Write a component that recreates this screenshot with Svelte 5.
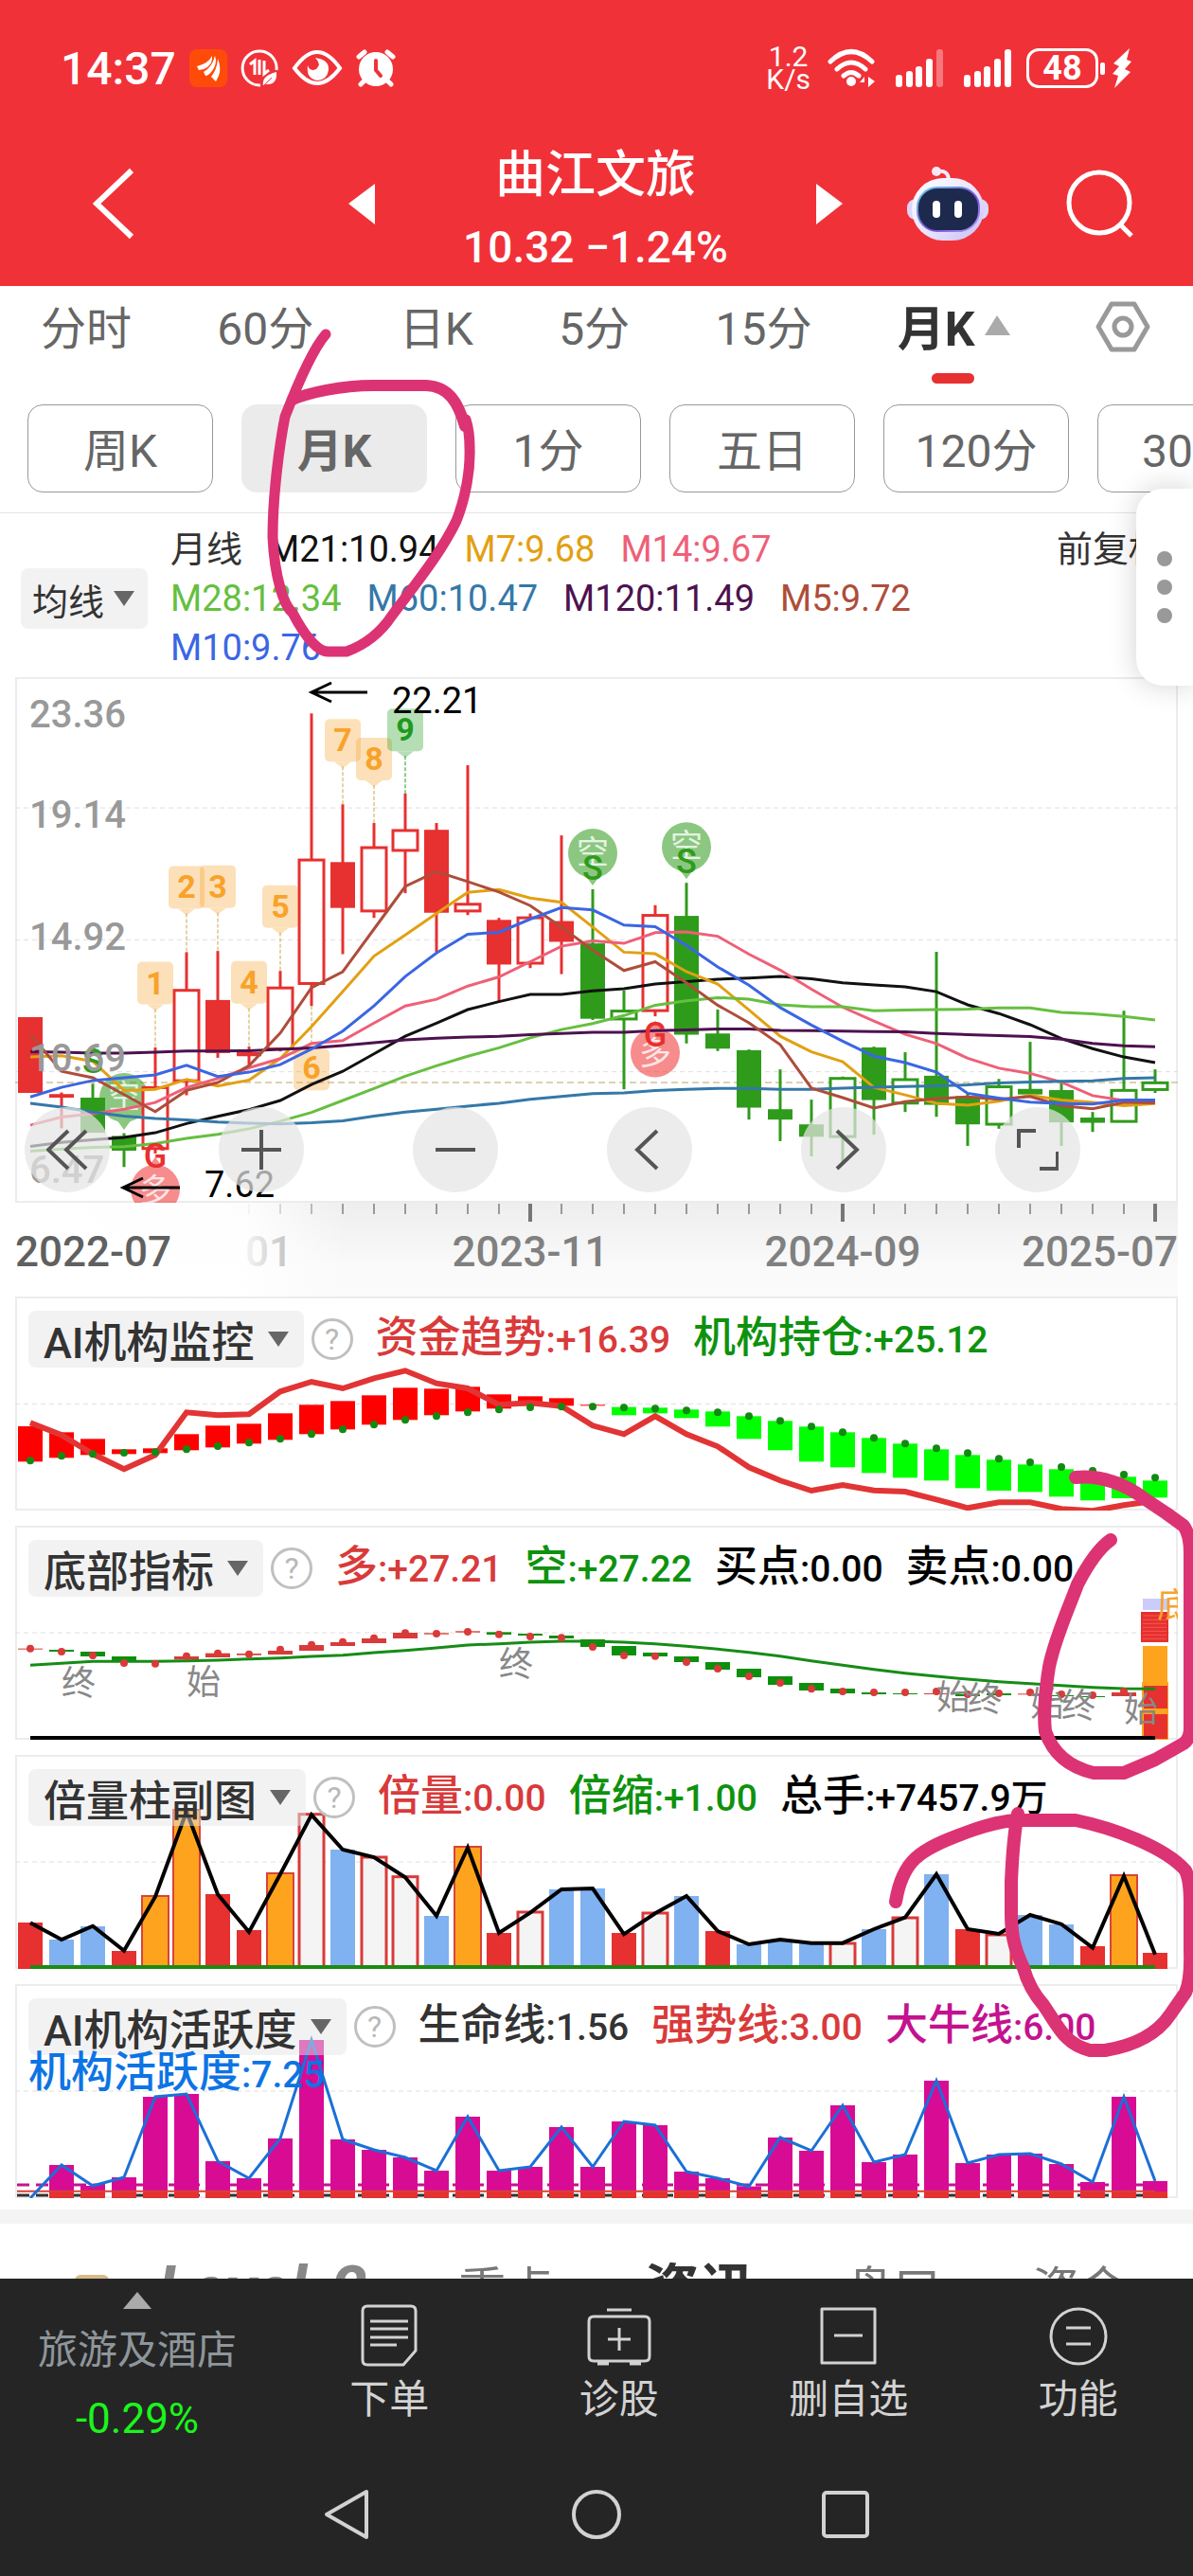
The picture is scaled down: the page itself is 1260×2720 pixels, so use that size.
<script>
const STEP = 33;
const LEFT = 16;
const RED = '#e73030';
const GREEN = '#2f9b1b';

const x = (i) => LEFT + i * STEP;
const my = (v) => (v - 33) / 2.376;
const scale = (top) => (v) => (v - top) / 3;
const points = (values, y) => values.map((v, i) => `${x(i)},${y(v).toFixed(1)}`).join(' ');

const periods = ['分时', '60分', '日K', '5分', '15分'];
const subPeriods = ['周K', '月K', '1分', '五日', '120分', '30分'];

const averages = [
  [
    { name: '月线', color: '#333' },
    { name: 'M21:10.94', color: '#111' },
    { name: 'M7:9.68', color: '#e2a012' },
    { name: 'M14:9.67', color: '#ee6078' },
  ],
  [
    { name: 'M28:12.34', color: '#66bf40' },
    { name: 'M60:10.47', color: '#3478a8' },
    { name: 'M120:11.49', color: '#4d124f' },
    { name: 'M5:9.72', color: '#ae4d3a' },
  ],
  [{ name: 'M10:9.76', color: '#3b66e3' }],
];

// high, body top, body bottom, low, kind (r/g filled, R/G hollow)
const candles = [
  [886, 886, 1076, 1076, 'r'], [1075, 1079, 1088, 1165, 'r'], [1053, 1088, 1176, 1176, 'g'],
  [1177, 1184, 1221, 1262, 'g'], [962, 1058, 1218, 1228, 'R'], [723, 814, 1048, 1082, 'R'],
  [720, 843, 976, 988, 'r'], [960, 974, 984, 1010, 'r'], [770, 808, 968, 972, 'R'],
  [124, 487, 804, 858, 'R'], [352, 497, 612, 728, 'r'], [399, 456, 622, 637, 'R'],
  [325, 413, 470, 575, 'R'], [399, 416, 624, 722, 'r'], [254, 598, 622, 630, 'R'],
  [637, 642, 754, 846, 'r'], [626, 632, 753, 763, 'R'], [430, 645, 697, 778, 'r'],
  [565, 701, 890, 893, 'g'], [819, 866, 893, 1067, 'G'], [605, 626, 872, 884, 'R'],
  [549, 632, 930, 952, 'g'], [867, 927, 965, 971, 'g'], [967, 969, 1113, 1143, 'g'],
  [1017, 1117, 1143, 1197, 'g'], [1093, 1155, 1186, 1235, 'g'], [1035, 1035, 1188, 1256, 'G'],
  [960, 962, 1094, 1181, 'g'], [974, 1038, 1104, 1124, 'G'], [722, 1033, 1106, 1136, 'g'],
  [1078, 1084, 1155, 1209, 'g'], [1041, 1056, 1157, 1166, 'G'], [948, 1066, 1080, 1080, 'g'],
  [1050, 1069, 1150, 1209, 'g'], [1124, 1138, 1151, 1174, 'g'], [870, 1065, 1150, 1150, 'G'],
  [1017, 1046, 1070, 1076, 'G'],
];

const lines = [
  { color: '#111', values: [1210, 1200, 1194, 1188, 1176, 1153, 1135, 1118, 1095, 1055, 1022, 978, 934, 901, 867, 847, 829, 829, 820, 815, 803, 797, 791, 788, 784, 790, 800, 805, 810, 822, 855, 877, 905, 940, 965, 986, 1000] },
  { color: '#e2a012', values: [986, 983, 997, 1070, 1067, 1042, 1059, 1044, 990, 910, 822, 733, 680, 626, 573, 566, 587, 598, 660, 723, 727, 772, 803, 868, 934, 973, 998, 1062, 1081, 1102, 1107, 1097, 1082, 1094, 1100, 1108, 1103] },
  { color: '#ee6078', values: [1157, 1137, 1128, 1117, 1100, 1063, 1040, 1013, 990, 952, 945, 901, 858, 841, 808, 785, 747, 708, 695, 701, 674, 672, 683, 728, 768, 816, 861, 896, 929, 952, 989, 1014, 1027, 1049, 1083, 1095, 1095] },
  { color: '#66bf40', values: [1222, 1217, 1213, 1211, 1203, 1190, 1180, 1166, 1147, 1125, 1095, 1065, 1034, 1008, 984, 963, 938, 917, 902, 882, 856, 845, 837, 841, 855, 860, 860, 870, 868, 867, 866, 863, 863, 874, 878, 884, 893] },
  { color: '#3478a8', values: [1102, 1112, 1124, 1134, 1140, 1144, 1149, 1152, 1154, 1151, 1146, 1134, 1124, 1117, 1109, 1102, 1092, 1085, 1078, 1076, 1070, 1067, 1065, 1065, 1067, 1067, 1064, 1062, 1060, 1058, 1056, 1051, 1049, 1047, 1046, 1040, 1038] },
  { color: '#4d124f', values: [973, 974, 976, 976, 974, 971, 971, 970, 967, 963, 957, 950, 943, 939, 936, 934, 930, 927, 924, 924, 920, 918, 916, 916, 919, 920, 921, 922, 923, 927, 930, 932, 935, 941, 952, 958, 960] },
  { color: '#ae4d3a', values: [930, 1022, 1038, 1080, 1123, 1070, 1050, 1008, 926, 812, 772, 665, 558, 521, 546, 572, 606, 660, 718, 769, 747, 800, 856, 900, 955, 1064, 1088, 1114, 1098, 1090, 1086, 1092, 1085, 1108, 1116, 1100, 1101] },
  { color: '#3b66e3', values: [1086, 1062, 1045, 1038, 1031, 1007, 1035, 1024, 1005, 966, 921, 858, 784, 725, 678, 673, 640, 611, 617, 655, 659, 706, 760, 806, 862, 906, 946, 984, 1000, 1024, 1077, 1089, 1099, 1103, 1104, 1094, 1094] },
];

const grid = [361, 692, 1023];
const prices = [
  { text: '23.36', v: 158 },
  { text: '19.14', v: 411 },
  { text: '14.92', v: 718 },
  { text: '10.69', v: 1022 },
  { text: '6.47', v: 1302 },
];

const tags = [
  { n: 1, i: 4, v: 747, end: 962 },
  { n: 2, i: 5, v: 507, end: 723 },
  { n: 3, i: 6, v: 505, end: 720 },
  { n: 4, i: 7, v: 745, end: 960 },
  { n: 5, i: 8, v: 555, end: 770 },
  { n: 7, i: 10, v: 138, end: 352 },
  { n: 8, i: 11, v: 185, end: 399 },
  { n: 9, i: 12, v: 112, end: 325 },
];

const shorts = [{ i: 3, v: 1088 }, { i: 18, v: 475 }, { i: 21, v: 459 }];
const longs = [{ i: 4, v: 1318 }, { i: 20, v: 975 }];
const letters = [
  { t: 'S', i: 2, v: 995 }, { t: 'S', i: 18, v: 510 }, { t: 'S', i: 21, v: 494 },
  { t: 'G', i: 4, v: 1232 }, { t: 'G', i: 20, v: 928 },
];

const dates = [
  { text: '2023-11', i: 16 },
  { text: '2024-09', i: 26 },
];

// AI monitor: bar top, bar bottom, dot
const ay = scale(23);
const monitor = [
  [434, 546, 543], [453, 534, 528], [474, 525, 522], [507, 522, 518], [504, 519, 516], [459, 510, 507],
  [432, 501, 497], [426, 489, 486], [393, 477, 474], [366, 459, 459], [354, 444, 444], [336, 429, 429],
  [312, 414, 414], [315, 399, 402], [309, 387, 390], [333, 378, 381], [339, 369, 374], [345, 369, 372],
  [366, 369, 372], [373, 399, 375], [375, 393, 378], [381, 408, 384], [387, 435, 390], [402, 474, 402],
  [417, 510, 417], [435, 546, 435], [453, 564, 453], [471, 582, 471], [489, 597, 489], [507, 606, 504],
  [525, 630, 519], [540, 638, 537], [555, 642, 548], [570, 657, 563], [584, 669, 575], [594, 662, 587],
  [606, 660, 597],
];
const fund = [423, 462, 522, 570, 525, 390, 399, 396, 324, 293, 314, 282, 258, 298, 314, 366, 360, 370, 432, 459, 402, 459, 498, 564, 606, 638, 620, 637, 641, 666, 693, 675, 675, 696, 702, 684, 670];

// bottom indicator
const by = scale(750);
const bottoms = [
  [1139, 1142, 1139, 'r'], [1143, 1149, 1149, 'g'], [1149, 1164, 1161, 'g'], [1164, 1182, 1185, 'g'],
  [1178, 1181, 1187, 'r'], [1164, 1174, 1163, 'r'], [1154, 1167, 1154, 'r'], [1155, 1160, 1157, 'r'],
  [1146, 1158, 1142, 'r'], [1128, 1146, 1127, 'r'], [1119, 1131, 1118, 'r'], [1107, 1122, 1106, 'r'],
  [1089, 1107, 1090, 'r'], [1090, 1094, 1092, 'r'], [1084, 1088, 1086, 'r'], [1087, 1095, 1094, 'g'],
  [1092, 1098, 1101, 'g'], [1098, 1107, 1105, 'g'], [1110, 1134, 1134, 'g'], [1131, 1161, 1161, 'g'],
  [1152, 1164, 1163, 'g'], [1164, 1182, 1182, 'g'], [1182, 1206, 1203, 'g'], [1203, 1230, 1227, 'g'],
  [1227, 1254, 1248, 'g'], [1248, 1272, 1267, 'g'], [1266, 1281, 1275, 'g'], [1278, 1284, 1278, 'g'],
  [1281, 1284, 1278, 'g'], [1281, 1284, 1275, 'r'], [1284, 1290, 1284, 'g'], [1281, 1287, 1281, 'g'],
  [1282, 1285, 1278, 'r'], [1287, 1290, 1284, 'g'], [1290, 1293, 1287, 'g'], [1278, 1290, 1275, 'r'],
];
const trend = [1192, 1186, 1180, 1180, 1180, 1178, 1176, 1172, 1169, 1164, 1160, 1152, 1145, 1137, 1128, 1124, 1119, 1116, 1116, 1119, 1124, 1132, 1141, 1151, 1163, 1178, 1192, 1205, 1217, 1227, 1236, 1244, 1250, 1256, 1262, 1266, 1267];
const marks = [
  { t: '终', i: 1, v: 1287 }, { t: '始', i: 5, v: 1283 }, { t: '终', i: 15, v: 1228 },
  { t: '始', i: 29, v: 1332 }, { t: '终', i: 30, v: 1338 }, { t: '始', i: 32, v: 1354 },
  { t: '终', i: 33, v: 1360 }, { t: '始', i: 35, v: 1370 },
];

// volume: r filled red, b blue, o orange, h hollow
const vy = scale(36);
const volumes = [
  [567, 'r'], [621, 'b'], [579, 'b'], [657, 'r'], [480, 'o'], [207, 'o'], [477, 'r'], [591, 'r'],
  [408, 'o'], [218, 'h'], [336, 'b'], [354, 'h'], [416, 'h'], [546, 'b'], [324, 'o'], [600, 'r'],
  [528, 'h'], [462, 'b'], [459, 'b'], [600, 'r'], [531, 'h'], [483, 'b'], [594, 'r'], [636, 'b'],
  [627, 'b'], [634, 'b'], [627, 'h'], [588, 'b'], [546, 'h'], [414, 'b'], [588, 'r'], [600, 'h'],
  [543, 'b'], [573, 'b'], [642, 'r'], [414, 'o'], [663, 'r'],
];
const volumeLine = [568, 621, 578, 656, 485, 215, 478, 597, 414, 226, 336, 360, 424, 546, 330, 600, 536, 462, 459, 604, 538, 483, 594, 636, 621, 632, 632, 588, 551, 414, 588, 603, 543, 572, 647, 420, 668];

// activity
const cy = scale(762);
const activity = [1440, 1335, 1401, 1374, 1119, 1110, 1323, 1377, 1251, 939, 1254, 1287, 1311, 1353, 1182, 1353, 1341, 1215, 1341, 1197, 1209, 1356, 1377, 1403, 1248, 1290, 1146, 1326, 1302, 1068, 1329, 1302, 1299, 1332, 1389, 1119, 1386];

const panels = [
  {
    id: 'monitor', title: 'AI机构监控',
    values: [['资金趋势', '+16.39', '#d93a3a'], ['机构持仓', '+25.12', '#0e920e']],
  },
  {
    id: 'bottom', title: '底部指标',
    values: [['多', '+27.21', '#d93a3a'], ['空', '+27.22', '#0e920e'], ['买点', '0.00', '#000'], ['卖点', '0.00', '#000']],
  },
  {
    id: 'volume', title: '倍量柱副图',
    values: [['倍量', '0.00', '#d93a3a'], ['倍缩', '+1.00', '#0e920e'], ['总手', '+7457.9万', '#000']],
  },
  {
    id: 'activity', title: 'AI机构活跃度',
    values: [['生命线', '1.56', '#333'], ['强势线', '3.00', '#d93a3a'], ['大牛线', '6.00', '#c4128f']],
    extra: ['机构活跃度', '7.25'],
  },
];
const gridLine = { monitor: ay(363), bottom: by(1089), volume: vy(375), activity: cy(1101) };
</script>

<main class="page">
  <header class="top">
    <div class="status">
      <span class="clock">14:37</span>
      <svg class="app-icon" width="40" height="40" viewBox="0 0 40 40">
        <rect width="40" height="40" rx="8" fill="#ff4b0a" />
        <path d="M8 18 Q20 15 24 7 Q25 14 19 19 Q15 22 10 22Z M15 24 Q24 19 27 7 Q30 15 24 23 Q20 28 17 28Z M23 29 Q29 22 30 10 Q34 20 31 28 L28 34Z" fill="#fff" />
      </svg>
      <svg width="40" height="40" viewBox="0 0 40 40" fill="none" stroke="#fff" stroke-width="3">
        <path d="M21 38 A18 18 0 1 1 38 22" />
        <path d="M10 16 L15 12 V27 M20 11 V27 M25 12 V26 L30 22" stroke-width="3" />
        <path d="M24 38 Q22 28 38 24 Q39 38 27 37 Z" fill="#fff" stroke="none" />
        <path d="M25 38 L33 30" stroke="#f13138" stroke-width="1" />
      </svg>
      <svg width="54" height="40" viewBox="0 0 54 40">
        <path d="M3 20 Q27 -14 51 20 Q27 52 3 20Z" fill="none" stroke="#fff" stroke-width="4" />
        <path d="M17 17 Q19 24 26 21 Q32 16 25 9 Q40 11 39 22 Q37 33 27 33 Q15 31 17 17Z" fill="#fff" />
      </svg>
      <svg width="42" height="40" viewBox="0 0 42 40">
        <circle cx="21" cy="21" r="18" fill="#fff" />
        <path d="M3 8 L9 3 M39 8 L33 3 M9 33 L5 37 M33 33 L37 37" stroke="#fff" stroke-width="5" stroke-linecap="round" />
        <path d="M21 12 V22 L26 28" fill="none" stroke="#f13138" stroke-width="4" stroke-linecap="round" />
      </svg>
      <span class="speed">1.2<br />K/s</span>
      <svg class="wifi" width="50" height="42" viewBox="0 0 50 42" fill="none" stroke="#fff" stroke-width="5" stroke-linecap="round">
        <path d="M3 14 Q25 -7 47 14 M10 22 Q25 8 40 22 M17 29 Q25 22 33 29" />
        <circle cx="25" cy="35" r="5" fill="#fff" stroke="none" />
        <path d="M34 36 L39 30 V40 V36Z M43 30 V41 L50 35Z" fill="#fff" stroke="none" />
      </svg>
      {#each [0.35, 1] as last}
        <svg class="signal" width="50" height="40" viewBox="0 0 50 40" fill="#fff">
          <rect x="0" y="27" width="7" height="13" rx="3" />
          <rect x="11" y="23" width="7" height="17" rx="3" />
          <rect x="21" y="18" width="7" height="22" rx="3" />
          <rect x="32" y="10" width="7" height="30" rx="3" />
          <rect x="43" y="0" width="7" height="40" rx="3" opacity={last} />
        </svg>
      {/each}
      <span class="battery">48</span>
      <svg class="bolt" width="34" height="44" viewBox="0 0 34 44" fill="#fff">
        <rect x="0" y="16" width="5" height="13" rx="2" />
        <path d="M31 1 L14 17 L20 20 L13 28 L19 30 L15 43 L32 26 L26 23 L33 15 L28 13Z" />
      </svg>
    </div>

    <div class="titlebar">
      <button class="plain" aria-label="返回">
        <svg width="46" height="76" viewBox="0 0 46 76"><path d="M41 3 L4 38 L41 73" fill="none" stroke="#fff" stroke-width="6" /></svg>
      </button>
      <div class="stock">
        <button class="plain" aria-label="上一只"><svg width="28" height="43" viewBox="0 0 28 43"><path d="M28 0 V43 L0 21Z" fill="#fff" /></svg></button>
        <div class="name">
          <h1>曲江文旅</h1>
          <p>10.32 −1.24%</p>
        </div>
        <button class="plain" aria-label="下一只"><svg width="28" height="43" viewBox="0 0 28 43"><path d="M0 0 V43 L28 21Z" fill="#fff" /></svg></button>
      </div>
      <button class="plain" aria-label="助手">
        <svg width="86" height="80" viewBox="0 0 86 80">
          <defs>
            <linearGradient id="head" x1="0" y1="0" x2="1" y2="1">
              <stop offset="0" stop-color="#fff" />
              <stop offset="0.55" stop-color="#e8e4fb" />
              <stop offset="1" stop-color="#c4bdf5" />
            </linearGradient>
            <linearGradient id="rim" x1="0" y1="0" x2="1" y2="1">
              <stop offset="0" stop-color="#6fd0e8" />
              <stop offset="0.6" stop-color="#7a4de0" />
              <stop offset="1" stop-color="#b9a2ff" />
            </linearGradient>
          </defs>
          <path d="M32 6 Q44 4 44 16" fill="none" stroke="#f3eafa" stroke-width="4" />
          <circle cx="31" cy="6" r="5" fill="#f7e6f4" />
          <rect x="0" y="35" width="86" height="22" rx="9" fill="#dcd6fa" />
          <rect x="5" y="13" width="76" height="66" rx="33" fill="url(#head)" />
          <rect x="11" y="23" width="65" height="46" rx="21" fill="#1d2a4d" stroke="url(#rim)" stroke-width="2" />
          <rect x="27" y="37" width="8" height="18" rx="4" fill="#fff" />
          <rect x="50" y="37" width="8" height="18" rx="4" fill="#fff" />
        </svg>
      </button>
      <button class="plain" aria-label="搜索">
        <svg width="72" height="72" viewBox="0 0 72 72" fill="none" stroke="#fff" stroke-width="5">
          <circle cx="35" cy="35" r="32" /><path d="M57 58 L69 70" />
        </svg>
      </button>
    </div>
  </header>

  <nav class="periods">
    {#each periods as p}
      <button class="plain">{p}</button>
    {/each}
    <button class="plain current">月K
      <svg width="27" height="21" viewBox="0 0 27 21"><path d="M13 0 L27 21 H0Z" fill="#aaa" /></svg>
    </button>
    <button class="plain" aria-label="设置">
      <svg width="58" height="54" viewBox="0 0 58 54" fill="none" stroke="#999" stroke-width="5" stroke-linejoin="round">
        <path d="M17 3 H41 L55 27 L41 51 H17 L3 27Z" /><circle cx="29" cy="27" r="9" />
      </svg>
    </button>
  </nav>

  <div class="pills">
    {#each subPeriods as p}
      <button class="pill" class:active={p === '月K'}>{p}</button>
    {/each}
  </div>

  <section class="legend">
    <button class="pick small">均线 <svg width="22" height="16" viewBox="0 0 22 16"><path d="M0 0 H22 L11 16Z" fill="#666" /></svg></button>
    <div class="averages">
      {#each averages as row}
        <div class="row">
          {#each row as a}
            <span style="color: {a.color}">{a.name}</span>
          {/each}
        </div>
      {/each}
    </div>
    <span class="adjust">前复权</span>
  </section>

  <section class="charts">
    <div class="chart">
      <svg viewBox="0 0 1228 555">
        <rect x="1" y="1" width="1226" height="553" class="frame" />
        {#each grid as v}
          <line x1="0" x2="1228" y1={my(v)} y2={my(v)} class="grid" />
        {/each}
        <line x1="0" x2="1228" y1={my(1050)} y2={my(1050)} stroke="#bda36c" stroke-width="1" stroke-dasharray="7 4" />

        {#each shorts as s}
          <g opacity="0.55">
            <circle cx={x(s.i)} cy={my(s.v)} r="26" fill="#2f9b1b" />
            <path d="M{x(s.i) - 8} {my(s.v) + 23} h16 l-8 11z" fill="#2f9b1b" />
            <text x={x(s.i)} y={my(s.v) + 11} class="coin">空</text>
          </g>
        {/each}
        {#each longs as s}
          <g opacity="0.55">
            <circle cx={x(s.i)} cy={my(s.v)} r="26" fill="#f03030" />
            <path d="M{x(s.i) - 8} {my(s.v) - 23} h16 l-8 -11z" fill="#f03030" />
            <text x={x(s.i)} y={my(s.v) + 13} class="coin">多</text>
          </g>
        {/each}

        {#each candles as [high, top, bottom, low, kind], i}
          {@const color = kind.toLowerCase() === 'r' ? RED : GREEN}
          <line x1={x(i)} x2={x(i)} y1={my(high)} y2={my(low)} stroke={color} stroke-width="3" />
          {#if kind === 'r' || kind === 'g'}
            <rect x={x(i) - 13} y={my(top)} width="26" height={my(bottom) - my(top)} fill={color} />
          {:else}
            <rect x={x(i) - 13} y={my(top) + 2} width="26" height={my(bottom) - my(top) - 3} fill="#fff" stroke={color} stroke-width="3" />
          {/if}
        {/each}

        {#each tags as t}
          {@const c = t.n === 9 ? '#1d9a1d' : '#f8a22a'}
          <line x1={x(t.i)} x2={x(t.i)} y1={my(t.v) + 50} y2={my(t.end)} stroke={t.n === 9 ? c : '#c9a74a'} stroke-dasharray="4 2" />
          <g fill={c} opacity="0.32">
            <rect x={x(t.i) - 19} y={my(t.v)} width="38" height="45" rx="5" />
            <path d="M{x(t.i) - 9} {my(t.v) + 45} h18 l-9 7z" />
          </g>
          <text x={x(t.i)} y={my(t.v) + 34} class="tag" fill={c}>{t.n}</text>
        {/each}
        <line x1={x(9)} x2={x(9)} y1={my(858)} y2={my(955)} stroke="#c9a74a" stroke-dasharray="4 2" />
        <g fill="#f8a22a" opacity="0.32">
          <rect x={x(9) - 19} y={my(965)} width="38" height="44" rx="5" />
          <path d="M{x(9) - 9} {my(965)} h18 l-9 -7z" />
        </g>
        <text x={x(9)} y={my(965) + 32} class="tag" fill="#f8a22a">6</text>

        {#each lines as l}
          <polyline points={points(l.values, my)} fill="none" stroke={l.color} stroke-width="3" />
        {/each}

        {#each letters as s}
          <text x={x(s.i)} y={my(s.v) + 13} class="letter" fill={s.t === 'S' ? GREEN : RED}>{s.t}</text>
        {/each}
        {#each prices as p}
          <text x="15" y={my(p.v)} class="price">{p.text}</text>
        {/each}

        <path d="M372 16 H314 M334 6 L313 16 L334 26" class="arrow" />
        <text x="398" y="38" class="peak">22.21</text>
        <path d="M174 539 H115 M135 529 L114 539 L135 549" class="arrow" />
        <text x="200" y="549" class="peak">7.62</text>
      </svg>
      <div class="tools">
        <button aria-label="展开"><svg viewBox="0 0 44 44"><path d="M23 2 L2 22 L23 42 M42 2 L21 22 L42 42" /></svg></button>
        <button aria-label="放大"><svg viewBox="0 0 44 44"><path d="M22 1 V43 M1 22 H43" /></svg></button>
        <button aria-label="缩小"><svg viewBox="0 0 44 44"><path d="M1 22 H43" /></svg></button>
        <button aria-label="左移"><svg viewBox="0 0 44 44"><path d="M30 2 L9 22 L30 42" /></svg></button>
        <button aria-label="右移"><svg viewBox="0 0 44 44"><path d="M15 2 L36 22 L15 42" /></svg></button>
        <button aria-label="全屏"><svg viewBox="0 0 44 44"><path d="M2 20 V2 H20 M24 42 H43 V24" /></svg></button>
      </div>
    </div>

    <svg class="axis" viewBox="0 0 1228 99">
      <defs>
        <linearGradient id="fade" x1="0" x2="0" y1="0" y2="1">
          <stop offset="0" stop-color="#eeeeee" /><stop offset="0.7" stop-color="#fafafa" /><stop offset="1" stop-color="#fafafa" />
        </linearGradient>
        <linearGradient id="side" x1="0" x2="1" y1="0" y2="0">
          <stop offset="0" stop-color="#fff" stop-opacity="1" /><stop offset="0.7" stop-color="#fff" stop-opacity="0.9" /><stop offset="1" stop-color="#fff" stop-opacity="0" />
        </linearGradient>
      </defs>
      <rect width="1228" height="99" fill="url(#fade)" />
      {#each candles as _, i}
        {#if i > 6}
          {@const major = i % 10 === 6}
          <line x1={x(i)} x2={x(i)} y1="1" y2={major ? 20 : 12} stroke={major ? '#777' : '#999'} stroke-width={major ? 4 : 2} />
        {/if}
      {/each}
      <text x="293" y="67" class="date" text-anchor="end">01</text>
      <rect width="350" height="99" fill="url(#side)" />
      {#each dates as d}
        <text x={x(d.i)} y="67" class="date" text-anchor="middle">{d.text}</text>
      {/each}
      <text x="1228" y="67" class="date" text-anchor="end">2025-07</text>
      <text x="0" y="67" class="date first">2022-07</text>
    </svg>

    {#each panels as p (p.id)}
      <div class="panel">
        <svg viewBox="0 0 1228 226">
          <rect x="1" y="1" width="1226" height="224" class="frame" />
          <line x1="0" x2="1228" y1={gridLine[p.id]} y2={gridLine[p.id]} class="grid" />
          {#if p.id === 'monitor'}
            {#each monitor as [top, bottom], i}
              <rect x={x(i) - 13} y={ay(top)} width="26" height={ay(bottom) - ay(top)} fill={i < 19 ? '#f00' : '#0f0'} />
            {/each}
            <polyline points={points(fund, ay)} fill="none" stroke="#e23434" stroke-width="6" />
            {#each monitor as [, , dot], i}
              <circle cx={x(i)} cy={ay(dot)} r="4" fill="#128a12" />
            {/each}
          {:else if p.id === 'bottom'}
            {#each bottoms as [top, bottom, , kind], i}
              <rect x={x(i) - 13} y={by(top)} width="26" height={by(bottom) - by(top)} fill={kind === 'r' ? '#d93a3a' : '#0c8f0c'} />
            {/each}
            <rect x="1191" y={by(981)} width="26" height="12" fill="#ccccfb" />
            <rect x="1189" y={by(1023)} width="29" height="32" fill={RED} />
            {#each [1035, 1048, 1060, 1072, 1084, 1096, 1108] as v}
              <line x1="1191" x2="1216" y1={by(v)} y2={by(v)} stroke="#f05a50" />
            {/each}
            <rect x="1191" y={by(1131)} width="26" height="40" fill="#fda31e" />
            <rect x="1190" y={by(1245)} width="28" height="62" fill="#fda31e" />
            <rect x="1192" y={by(1257)} width="25" height="24" fill={RED} />
            <rect x="1192" y={by(1347)} width="25" height="26" fill={RED} />
            <line x1={x(0)} x2={x(36)} y1="224" y2="224" stroke="#000" stroke-width="4" />
            <polyline points={points(trend, by)} fill="none" stroke="#168c16" stroke-width="3" />
            {#each bottoms as [, , dot], i}
              <circle cx={x(i)} cy={by(dot)} r="4" fill="#d93a3a" />
            {/each}
            {#each marks as m}
              <text x={x(m.i)} y={by(m.v)} class="mark">{m.t}</text>
            {/each}
            <text x="1206" y={by(1042)} class="mark low">底</text>
          {:else if p.id === 'volume'}
            {#each volumes as [v, kind], i}
              {#if kind === 'h'}
                <rect x={x(i) - 13} y={vy(v) + 2} width="26" height={vy(714) - vy(v)} fill="#f5f4f4" stroke="#d93a3a" stroke-width="3" />
              {:else if kind === 'o'}
                <rect x={x(i) - 14} y={vy(v) + 1} width="28" height={vy(714) - vy(v)} fill="#fda31e" stroke="#d9433a" stroke-width="2" />
              {:else}
                <rect x={x(i) - 13} y={vy(v)} width="26" height={vy(715) - vy(v)} fill={kind === 'r' ? RED : '#80b1f0'} />
              {/if}
            {/each}
            <polyline points={points(volumeLine, vy)} fill="none" stroke="#000" stroke-width="4" />
            <line x1={x(0)} x2={x(36)} y1="224" y2="224" stroke="#1c8a10" stroke-width="4" />
          {:else}
            <line x1="2" x2={x(36)} y1={cy(1398)} y2={cy(1398)} stroke="#c4128f" stroke-width="3" stroke-dasharray="13 7" />
            <line x1="2" x2={x(36)} y1={cy(1431)} y2={cy(1431)} stroke="#333" stroke-width="3" stroke-dasharray="13 7" />
            {#each activity as v, i}
              {#if i > 0}
                <rect x={x(i) - 13} y={cy(v)} width="26" height={cy(1442) - cy(v)} fill="#d80b95" />
                <rect x={x(i) - 13} y={cy(1419)} width="26" height="8" fill="#e4322f" />
              {/if}
            {/each}
            <line x1="2" x2={x(36)} y1={cy(1418)} y2={cy(1418)} stroke="#d9403a" stroke-width="2" />
            <polyline points={points(activity, cy)} fill="none" stroke="#1b70d6" stroke-width="3" />
          {/if}
        </svg>
        <div class="head">
          <button class="pick">{p.title} <svg width="22" height="16" viewBox="0 0 22 16"><path d="M0 0 H22 L11 16Z" fill="#666" /></svg></button>
          <button class="help" aria-label="说明">?</button>
          {#each p.values as [label, value, color]}
            <span class="value" style="color: {color}">{label}<b>:{value}</b></span>
          {/each}
        </div>
        {#if p.extra}
          <div class="extra">{p.extra[0]}<b>:{p.extra[1]}</b></div>
        {/if}
      </div>
    {/each}
  </section>

  <div class="strip"></div>
  <nav class="info">
    <a href="#level2" class="level"><i></i>Level-2</a>
    <a href="#key">重点</a>
    <a href="#news" class="on">资讯</a>
    <a href="#quote">盘口</a>
    <a href="#money">资金</a>
  </nav>

  <footer class="bottom">
    <div class="actions">
      <button class="plain sector">
        <svg width="30" height="18" viewBox="0 0 30 18"><path d="M15 0 L30 18 H0Z" fill="#aaa" /></svg>
        <span>旅游及酒店</span>
        <b>-0.29%</b>
      </button>
      <button class="plain">
        <svg width="70" height="68" viewBox="0 0 70 68">
          <path d="M12 3 H58 Q63 3 63 8 V50 L50 65 H12 Q7 65 7 60 V8 Q7 3 12 3Z M15 19 H55 M15 27 H55 M15 36 H55 M15 44 H43" />
        </svg>
        下单
      </button>
      <button class="plain">
        <svg width="70" height="68" viewBox="0 0 70 68">
          <path d="M22 7 H48 M8 14 H62 Q67 14 67 19 V56 Q67 61 62 61 H8 Q3 61 3 56 V19 Q3 14 8 14Z M35 26 V50 M23 38 H47 M12 64 H24 M46 64 H58" />
        </svg>
        诊股
      </button>
      <button class="plain">
        <svg width="70" height="68" viewBox="0 0 70 68"><path d="M7 6 H63 V63 H7Z M20 34 H50" /></svg>
        删自选
      </button>
      <button class="plain">
        <svg width="70" height="68" viewBox="0 0 70 68"><circle cx="35" cy="35" r="29" /><path d="M22 26 H48 M22 43 H48" /></svg>
        功能
      </button>
    </div>
    <div class="system">
      <button class="plain" aria-label="后退"><svg width="54" height="54" viewBox="0 0 54 54"><path d="M47 3 V51 L5 27Z" /></svg></button>
      <button class="plain" aria-label="主页"><svg width="54" height="54" viewBox="0 0 54 54"><circle cx="27" cy="27" r="24" /></svg></button>
      <button class="plain" aria-label="最近任务"><svg width="54" height="54" viewBox="0 0 54 54"><rect x="4" y="4" width="46" height="46" rx="3" /></svg></button>
    </div>
  </footer>

  <button class="handle" aria-label="更多"><i></i><i></i><i></i></button>

  <!-- hand-drawn marks over the page -->
  <svg class="ink" viewBox="0 0 1260 2720" fill="none" stroke="#dc3374" stroke-width="14" stroke-linecap="round" stroke-linejoin="round">
    <path stroke-width="11" d="M344 353 C331 368 318 396 301 440 C296 465 288 520 288 567 C290 610 300 640 309 647 C320 668 334 688 346 688 H366 C388 680 404 665 414 650 C440 615 465 585 482 550 C490 530 497 500 496 473 Q496 455 492 443" />
    <path stroke-width="12" d="M309 422 C325 415 360 407 394 407 H450 C474 408 484 425 491 450" />
    <path d="M1136 1560 C1163 1557 1190 1568 1208 1582 L1232 1598 L1250 1611 Q1257 1620 1257 1640 V1825 Q1257 1836 1250 1841 L1220 1858 L1187 1872 H1155 C1130 1866 1112 1852 1104 1828 C1102 1810 1104 1785 1108 1760 C1114 1730 1128 1700 1138 1673 Q1156 1638 1173 1626" />
    <path d="M946 2008 C953 1965 970 1953 1020 1935 Q1055 1922 1077 1922 H1136 C1175 1930 1230 1950 1252 1975 Q1257 1985 1257 2010 V2060 Q1258 2090 1252 2104 L1236 2127 C1222 2148 1198 2160 1167 2165 H1151 C1124 2158 1118 2140 1102 2117 Q1087 2100 1081 2078 C1070 2055 1068 2040 1068 2020 V1987 Q1070 1940 1075 1915" />
  </svg>
</main>

<style>
:global(body) {
  background: #fff;
}

.page {
  position: relative;
  overflow: hidden;
  font-family: Roboto, "Noto Sans CJK SC", sans-serif;
  color: #333;
  background: #fff;
}

button {
  font: inherit;
  color: inherit;
}

svg {
  display: block;
  flex: none;
}

.plain {
  padding: 0;
  border: 0;
  background: none;
}

/* header */
.top {
  background: #f13138;
  color: #fff;
}

.status {
  display: flex;
  align-items: center;
  height: 144px;
  padding: 0 64px;
}

.clock {
  font-size: 48px;
  font-weight: 500;
}

.status svg {
  margin-left: 14px;
}

.speed {
  margin-left: auto;
  font-size: 30px;
  line-height: 24px;
  text-align: center;
}

.status .wifi {
  margin-left: 18px;
}

.status .signal {
  margin-left: 22px;
}

.battery {
  margin-left: 16px;
  width: 70px;
  line-height: 36px;
  border: 3px solid #fff;
  border-radius: 13px;
  font-size: 36px;
  font-weight: 700;
  text-align: center;
}

.status .bolt {
  margin-left: 2px;
}

.titlebar {
  display: grid;
  grid-template-columns: 270px 1fr 168px 70px;
  align-items: center;
  height: 158px;
  padding: 0 64px 0 98px;
}

.titlebar button {
  padding-bottom: 16px;
}

.stock {
  display: flex;
  align-items: center;
  justify-content: space-between;
  padding-right: 68px;
}

.name {
  text-align: center;
  line-height: 76px;
}

h1 {
  margin: 0;
  font-size: 53px;
  font-weight: 500;
}

.name p {
  margin: 0;
  font-size: 46px;
  font-weight: 500;
}

/* periods */
.periods {
  display: flex;
  justify-content: space-between;
  align-items: flex-start;
  height: 125px;
  padding: 0 45px 0 43px;
  box-sizing: border-box;
  font-size: 48px;
  color: #666;
}

.periods button {
  display: flex;
  align-items: center;
  height: 82px;
}

.periods button:last-child {
  height: 86px;
}

.periods .current {
  position: relative;
  gap: 10px;
  font-size: 50px;
  font-weight: 700;
  color: #333;
}

.current::after {
  content: "";
  position: absolute;
  bottom: -21px;
  left: 36px;
  width: 45px;
  height: 11px;
  border-radius: 6px;
  background: #e73030;
}

.pills {
  display: flex;
  gap: 30px;
  padding: 0 0 21px 29px;
  overflow: hidden;
  border-bottom: 1px solid #e4e4e4;
}

.pill {
  flex: none;
  width: 196px;
  height: 93px;
  padding: 0 0 4px;
  border: 1px solid #999;
  border-radius: 16px;
  background: #fff;
  font-size: 48px;
  color: #666;
}

.pill.active {
  border-color: #ebebeb;
  background: #ebebeb;
  font-weight: 700;
}

/* legend */
.legend {
  display: flex;
  align-items: center;
  padding: 12px 0 5px 22px;
  font-size: 38px;
}

.pick {
  display: flex;
  align-items: center;
  gap: 14px;
  height: 60px;
  padding: 0 16px;
  border: 0;
  border-radius: 8px;
  background: rgba(229, 229, 229, 0.5);
  font-size: 45px;
  white-space: nowrap;
}

.pick.small {
  height: 64px;
  gap: 10px;
  padding: 0 14px 0 12px;
  font-size: 38px;
}

.averages {
  margin-left: 24px;
}

.row {
  display: flex;
  gap: 27px;
  line-height: 52px;
}

.adjust {
  align-self: flex-start;
  margin-left: auto;
  margin-right: 30px;
  line-height: 52px;
}

/* charts */
.charts {
  padding: 0 16px;
}

.charts > svg,
.chart > svg,
.panel > svg {
  width: 100%;
  height: auto;
}

.chart,
.panel {
  position: relative;
}

.panel {
  margin-bottom: 16px;
}

.frame {
  fill: none;
  stroke: #ececec;
  stroke-width: 2;
}

.grid {
  stroke: #dedede;
  stroke-dasharray: 5 4;
}

.price {
  font-size: 40px;
  font-weight: 500;
  fill: #999;
}

.peak {
  font-size: 38px;
  fill: #000;
}

.arrow {
  fill: none;
  stroke: #000;
  stroke-width: 3;
}

.tag {
  font-size: 34px;
  font-weight: 700;
  text-anchor: middle;
}

.coin {
  font-size: 34px;
  text-anchor: middle;
  fill: #fff;
  fill-opacity: 0.8;
}

.letter {
  font-size: 36px;
  font-weight: 500;
  text-anchor: middle;
}

.date {
  font-size: 44px;
  font-weight: 500;
  fill: #808080;
}

.date.first {
  fill: #606060;
}

.mark {
  font-size: 36px;
  fill: #888;
}

.mark.low {
  fill: #f8a22a;
}

.tools {
  position: absolute;
  left: 10px;
  right: 103px;
  bottom: 11px;
  display: flex;
  justify-content: space-between;
}

.tools button {
  display: grid;
  place-items: center;
  width: 90px;
  height: 90px;
  padding: 0;
  border: 0;
  border-radius: 50%;
  background: rgba(228, 228, 228, 0.72);
}

.tools svg {
  width: 44px;
  fill: none;
  stroke: #555;
  stroke-width: 4;
}

.head {
  position: absolute;
  top: 14px;
  left: 14px;
  display: flex;
  align-items: center;
  font-size: 45px;
  font-weight: 500;
  white-space: nowrap;
}

.head b,
.extra b {
  font-size: 39px;
  font-weight: 500;
}

.help {
  width: 44px;
  height: 44px;
  margin: 0 0 0 8px;
  padding: 0;
  border: 3px solid #c0c0c0;
  border-radius: 50%;
  background: none;
  font-size: 32px;
  line-height: 36px;
  font-weight: 400;
  color: #b8b8b8;
}

.value {
  margin-left: 24px;
  line-height: 60px;
}

.extra {
  position: absolute;
  top: 74px;
  left: 14px;
  font-size: 45px;
  line-height: 40px;
  font-weight: 500;
  color: #0d74e4;
}

/* lower tabs */
.strip {
  height: 15px;
  margin-top: -4px;
  background: #f4f4f4;
}

.info {
  display: flex;
  justify-content: space-between;
  align-items: flex-start;
  height: 58px;
  padding: 40px 70px 0 79px;
  box-sizing: border-box;
  overflow: hidden;
  font-size: 50px;
  line-height: 60px;
}

.info a {
  color: #777;
  text-decoration: none;
}

.info .on {
  font-size: 58px;
  font-weight: 700;
  color: #333;
}

.info .level {
  display: flex;
  gap: 52px;
  font-size: 68px;
  font-style: italic;
  font-weight: 700;
  color: #888;
}

.level i {
  width: 36px;
  height: 40px;
  margin-top: 14px;
  border-radius: 6px;
  background: #d8b98c;
}

/* footer */
.bottom {
  position: relative;
  height: 315px;
  background: #252525;
  color: #d2d2d2;
}

.actions {
  display: grid;
  grid-template-columns: 290px repeat(4, 1fr);
  height: 196px;
  font-size: 42px;
}

.actions button {
  display: flex;
  flex-direction: column;
  align-items: center;
  padding-top: 26px;
  line-height: 68px;
}

.actions .sector {
  padding-top: 14px;
  line-height: 72px;
  color: #8e969b;
}

.sector span {
  margin-top: 8px;
}

.sector b {
  font-size: 44px;
  font-weight: 400;
  color: #1bf51b;
}

.actions button:not(.sector) svg,
.system svg {
  fill: none;
  stroke: #d2d2d2;
  stroke-width: 3;
  stroke-linejoin: round;
}

.system {
  display: flex;
  justify-content: center;
  gap: 209px;
  padding-top: 26px;
}

.system svg {
  stroke-width: 4;
}

/* overlays */
.handle {
  position: absolute;
  top: 516px;
  right: 0;
  display: flex;
  flex-direction: column;
  align-items: center;
  justify-content: center;
  gap: 14px;
  width: 60px;
  height: 208px;
  padding: 0;
  border: 0;
  border-radius: 28px 0 0 28px;
  background: #fff;
  box-shadow: 0 0 30px rgba(0, 0, 0, 0.18);
}

.handle i {
  width: 16px;
  height: 16px;
  border-radius: 50%;
  background: #999;
}

.ink {
  position: absolute;
  top: 0;
  left: 0;
  width: 100%;
  pointer-events: none;
}
</style>
